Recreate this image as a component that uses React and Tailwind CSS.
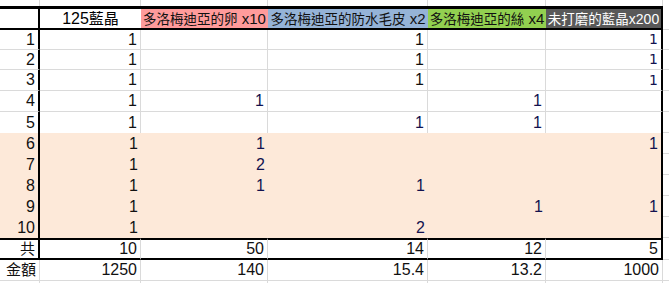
import React from 'react';
import clsx from 'clsx';

const FONT = { fontFamily: '"Liberation Sans", "Noto Sans CJK TC", sans-serif' };

// column widths, border-box (right gridline included)
const W = ['w-[40px]', 'w-[101px]', 'w-[127px]', 'w-[160px]', 'w-[118px]', 'w-[117px]'];
const PR = ['pr-[3px]', 'pr-[3px]', 'pr-[3px]', 'pr-[3px]', 'pr-[3px]', 'pr-[3px]'];

const rows = [
  ['1', '1', '', '1', '', '1'],
  ['2', '1', '', '1', '', '1'],
  ['3', '1', '', '1', '', '1'],
  ['4', '1', '1', '', '1', ''],
  ['5', '1', '', '1', '1', ''],
  ['6', '1', '1', '', '', '1'],
  ['7', '1', '2', '', '', ''],
  ['8', '1', '1', '1', '', ''],
  ['9', '1', '', '', '1', '1'],
  ['10', '1', '', '2', '', ''],
];
const heights = ['h-[20px]', 'h-[20px]', 'h-[21px]', 'h-[21px]', 'h-[21px]', 'h-[21px]', 'h-[21px]', 'h-[21px]', 'h-[21px]', 'h-[21px]'];

const totals = ['共', '10', '50', '14', '12', '5'];
const amounts = ['金額', '1250', '140', '15.4', '13.2', '1000'];

function Cell({ i, className, children }) {
  return (
    <div
      className={clsx(
        'flex shrink-0 items-center justify-end overflow-hidden whitespace-nowrap',
        W[i],
        PR[i],
        className
      )}
    >
      {children}
    </div>
  );
}

function Spacer() {
  return (
    <div className="flex h-[6px]">
      {W.map((w, i) => (
        <div key={i} className={clsx('shrink-0 border-r border-[#dadada]', w)} />
      ))}
      <div className="flex-1" />
    </div>
  );
}

// header label: CJK a little smaller than the latin part
function Head({ cjk, latin, small }) {
  return (
    <span className="whitespace-pre">
      <span className="text-[13.5px]">{cjk}</span>
      <span className={small ? 'text-[14px]' : 'text-[15px]'}>{latin}</span>
    </span>
  );
}

export default function App() {
  return (
    <div className="h-[283px] w-[669px] overflow-hidden bg-white text-[16px] text-[#111]" style={FONT}>
      <Spacer />

      {/* header */}
      <div className="flex h-[24px]">
        <Cell i={0} className="border-y-black border-t-[3px] border-b-2 border-r-2 border-r-black" />
        <Cell i={1} className="justify-center! pr-0! border-t-[3px] border-b-2 border-black text-black">
          <span>
            125<span className="text-[15px]">藍晶</span>
          </span>
        </Cell>
        <Cell i={2} className="justify-center! pr-0! border-t-[3px] border-b-2 border-black bg-[#ff9b9b] text-[#111]">
          <Head cjk="多洛梅迪亞的卵" latin=" x10" />
        </Cell>
        <Cell i={3} className="justify-center! pr-0! border-t-[3px] border-b-2 border-black bg-[#95b3d7] text-[#111]">
          <Head cjk="多洛梅迪亞的防水毛皮" latin=" x2" />
        </Cell>
        <Cell i={4} className="justify-center! pr-0! border-t-[3px] border-b-2 border-black bg-[#92d050] text-[#111]">
          <Head cjk="多洛梅迪亞的絲" latin=" x4" />
        </Cell>
        <Cell i={5} className="justify-center! pr-0! border-t-[3px] border-b-2 border-r-2 border-black bg-[#595959] text-white">
          <Head cjk="未打磨的藍晶" latin="x200" small />
        </Cell>
        <div className="flex-1 border-b border-[#dadada]" />
      </div>

      {/* data rows */}
      {rows.map((r, ri) => {
        const peach = ri >= 5;
        const line = ri < 4;
        return (
          <div key={ri} className={clsx('flex', heights[ri])}>
            {r.map((v, ci) => (
              <Cell
                key={ci}
                i={ci}
                className={clsx(
                  peach ? 'bg-[#fde9d9]' : 'bg-white',
                  line && 'border-b border-b-[#dadada]',
                  ci === 0 || ci === 5
                    ? 'border-r-2 border-r-black'
                    : !peach && 'border-r border-r-[#dadada]',
                  ci >= 2 && !(ci === 3 && ri < 3) && 'text-[#12124f]',
                  ci === 5 && ri < 3 && 'text-[14px] text-[#2a3f96]'
                )}
              >
                {ci === 5 && ri < 3 ? (
                  <span style={{ fontFamily: '"DejaVu Sans", sans-serif' }}>{v}</span>
                ) : (
                  v
                )}
              </Cell>
            ))}
            <div className="flex-1 border-b border-[#dadada]" />
          </div>
        );
      })}

      {/* totals */}
      <div className="flex h-[22px]">
        {totals.map((v, ci) => (
          <Cell
            key={ci}
            i={ci}
            className={clsx(
              'border-y-2 border-y-black',
              ci === 0 || ci === 5 ? 'border-r-2 border-r-black' : 'border-r border-r-[#dadada]',
              ci === 0 && 'text-[15px]'
            )}
          >
            {v}
          </Cell>
        ))}
        <div className="flex-1 border-b border-[#dadada]" />
      </div>

      {/* amounts */}
      <div className="flex h-[21px]">
        {amounts.map((v, ci) => (
          <Cell
            key={ci}
            i={ci}
            className={clsx('border-b border-r border-[#dadada]', ci === 0 && 'text-[15px]')}
          >
            {v}
          </Cell>
        ))}
        <div className="flex-1 border-b border-[#dadada]" />
      </div>

      <Spacer />
    </div>
  );
}
